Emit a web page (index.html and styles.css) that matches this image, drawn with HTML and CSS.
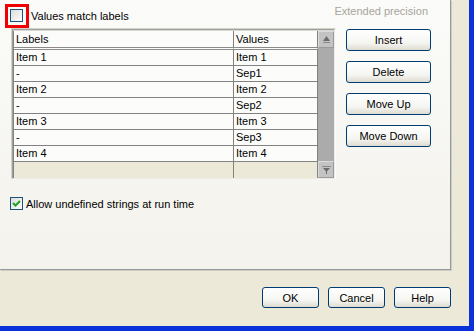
FILE: index.html
```html
<!DOCTYPE html>
<html lang="en">
<head>
  <meta charset="UTF-8">
  <title>List Properties</title>
  <link rel="stylesheet" href="styles.css">
</head>
<body>
  <div class="window">
    <div class="page">
      <div class="top-row">
        <label class="check-row">
          <span class="highlight"><span class="checkbox"></span></span>
          <span class="check-label">Values match labels</span>
        </label>
        <span class="disabled">Extended precision</span>
      </div>

      <div class="list-row">
        <div class="list">
          <div class="list-inner">
            <div class="grid">
              <div class="cell head">Labels</div><div class="cell head">Values</div>
              <div class="cell">Item 1</div><div class="cell">Item 1</div>
              <div class="cell">-</div><div class="cell">Sep1</div>
              <div class="cell">Item 2</div><div class="cell">Item 2</div>
              <div class="cell">-</div><div class="cell">Sep2</div>
              <div class="cell">Item 3</div><div class="cell">Item 3</div>
              <div class="cell">-</div><div class="cell">Sep3</div>
              <div class="cell">Item 4</div><div class="cell">Item 4</div>
              <div class="cell empty"></div><div class="cell empty"></div>
            </div>
            <div class="scrollbar">
              <div class="sb-btn">
                <svg width="9" height="7" viewBox="0 0 9 7"><polygon points="4.5,0 8,5 1,5" fill="#6b6b6b"/><rect x="1" y="6" width="7" height="1" fill="#8a8a8a"/></svg>
              </div>
              <div class="sb-track"></div>
              <div class="sb-btn">
                <svg width="9" height="8" viewBox="0 0 9 8"><rect x="0" y="0" width="9" height="1" fill="#8a8a8a"/><polygon points="1,2 8,2 4.5,6" fill="#6b6b6b"/><rect x="4" y="5" width="1" height="3" fill="#6b6b6b"/></svg>
              </div>
            </div>
          </div>
        </div>
        <div class="side-buttons">
          <button class="xp-btn side">Insert</button>
          <button class="xp-btn side">Delete</button>
          <button class="xp-btn side">Move Up</button>
          <button class="xp-btn side">Move Down</button>
        </div>
      </div>

      <label class="check-row allow">
        <span class="checkbox checked">
          <svg width="11" height="11" viewBox="0 0 11 11"><polyline points="2,5 4.5,7.5 9,3" fill="none" stroke="#21a121" stroke-width="2"/></svg>
        </span>
        <span class="check-label">Allow undefined strings at run time</span>
      </label>
    </div>

    <div class="footer">
      <button class="xp-btn foot">OK</button>
      <button class="xp-btn foot">Cancel</button>
      <button class="xp-btn foot">Help</button>
    </div>
  </div>
</body>
</html>
```

FILE: styles.css
```css
* {
  box-sizing: border-box;
}

body {
  margin: 0;
  font-family: 'Liberation Sans', Arial, sans-serif;
  font-size: 11px;
  color: #000;
  background: #ece9d8;
}

.window {
  box-sizing: content-box;
  width: 469px;
  height: 326px;
  background: #ece9d8;
  border-right: 5px solid #0a32d8;
  border-bottom: 5px solid #0a32d8;
  box-shadow: inset -1px -1px 0 #ece9d8;
}

.page {
  width: 451px;
  height: 270px;
  background: linear-gradient(#fbfbf9, #f3f2ec);
  border-right: 1px solid #919b9c;
  border-bottom: 1px solid #919b9c;
  box-shadow: 1px 1px 0 #d0cdbf;
}

.top-row {
  height: 28px;
  padding: 3px 0 0 5px;
  display: flex;
  justify-content: space-between;
}

.check-row {
  display: flex;
  align-items: center;
}

.highlight {
  width: 24px;
  height: 24px;
  border: 3px solid #f00000;
  padding: 2px;
}

.checkbox {
  display: flex;
  align-items: center;
  justify-content: center;
  width: 13px;
  height: 13px;
  border: 1px solid #1c5180;
  background: linear-gradient(135deg, #dcdcd7, #fefefe);
}

.check-label {
  margin-left: 2px;
}

.disabled {
  color: #a7a59c;
  margin: 2px 22px 0 0;
  line-height: 13px;
}

.list-row {
  display: flex;
  height: 151px;
}

.list {
  margin-left: 11px;
  border: 1px solid;
  border-color: #d4d2c8 #fbfbf9 #fbfbf9 #d4d2c8;
}

.list-inner {
  display: flex;
  padding-top: 1px;
  border: 1px solid;
  border-color: #a0a09c #ecebe5 #ecebe5 #a0a09c;
  box-shadow: inset 0 1px 0 #d6d6d2;
}

.grid {
  display: grid;
  grid-template-columns: 220px 84px;
  border-left: 1px solid #828282;
}

.cell {
  height: 16px;
  line-height: 15px;
  padding-left: 2px;
  background: #fcfcfb;
  border-right: 1px solid #828282;
  border-bottom: 1px solid #828282;
  white-space: nowrap;
}

.cell.head {
  height: 19px;
  line-height: 16px;
  border-bottom: 3px double #8a8a8a;
}

.cell.empty {
  background: #ece9d8;
  border-bottom: none;
}

.scrollbar {
  width: 16px;
  display: flex;
  flex-direction: column;
  background: #ababab;
}

.sb-btn {
  height: 17px;
  display: flex;
  align-items: center;
  justify-content: center;
  background: #c3c3c3;
  border: 1px solid;
  border-color: #dcdcdc #9a9a9a #9a9a9a #dcdcdc;
}

.sb-track {
  flex: 1;
}

.side-buttons {
  display: flex;
  flex-direction: column;
  gap: 10px;
  margin: 1px 0 0 10px;
}

.xp-btn {
  font-family: 'Liberation Sans', Arial, sans-serif;
  font-size: 11px;
  color: #000;
  padding: 0;
  border: 1px solid #003c74;
  border-radius: 3px;
  background: linear-gradient(#ffffff, #f5f5f1 65%, #dedbd0);
}

.xp-btn.side {
  width: 85px;
  height: 22px;
}

.check-row.allow {
  margin: 18px 0 0 10px;
}

.allow .check-label {
  margin-left: 3px;
}

.footer {
  display: flex;
  justify-content: flex-end;
  gap: 9px;
  padding: 17px 18px 0 0;
}

.xp-btn.foot {
  width: 57px;
  height: 21px;
}
```
